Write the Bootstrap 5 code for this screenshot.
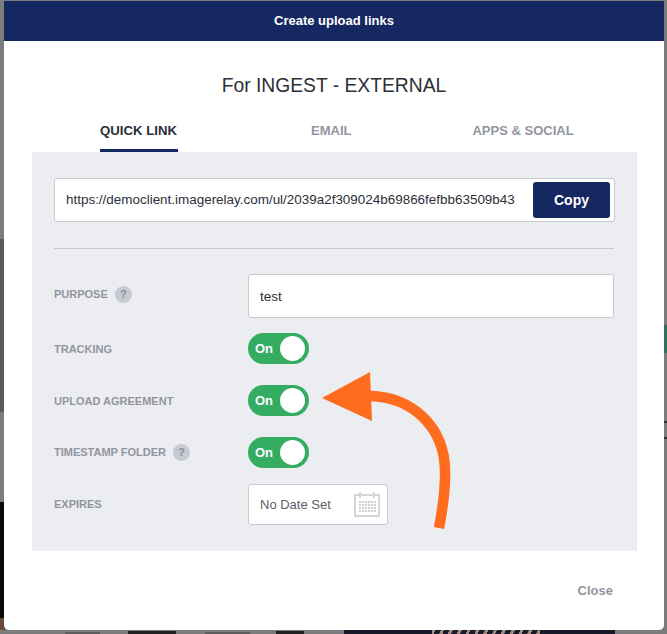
<!DOCTYPE html>
<html lang="en">
<head>
<meta charset="utf-8">
<title>Create upload links</title>
<link href="https://cdn.jsdelivr.net/npm/bootstrap@5.3.0/dist/css/bootstrap.min.css" rel="stylesheet">
<style>
html,body{height:634px;overflow:hidden}
body{font-family:"Liberation Sans",Arial,sans-serif;color:#2f3440;
background:
 linear-gradient(#6a4a3a,#6a4a3a) 0 618px/5px 12px no-repeat,
 linear-gradient(#5a5b60,#5a5b60) 0 239px/4px 173px no-repeat,
 linear-gradient(#0a0a0a,#0a0a0a) 0 502px/4px 116px no-repeat,
 linear-gradient(#2f6f5c,#2f6f5c) 664px 325px/3px 28px no-repeat,
 linear-gradient(#333,#333) 664px 421px/3px 2px no-repeat,
 linear-gradient(#333,#333) 664px 437px/3px 2px no-repeat,
 linear-gradient(#222,#222) 128px 631px/48px 3px no-repeat,
 linear-gradient(#222,#222) 276px 631px/28px 3px no-repeat,
 linear-gradient(#5d5d5d,#5d5d5d) 65px 632px/35px 2px no-repeat,
 linear-gradient(#5d5d5d,#5d5d5d) 205px 632px/45px 2px no-repeat,
 repeating-linear-gradient(115deg,#a08a80 0 3px,#1a1a2c 3px 8px) 432px 630px/108px 4px no-repeat,
 linear-gradient(#17172a,#17172a) 344px 630px/271px 4px no-repeat,
 #7c7c7c;
padding:1px 3px 4px 4px}
.sheet{width:660px;height:629px;background:#fff;border-radius:0 0 5px 5px}
.sheet-head{height:40px;background:#162861;color:#fff;font-size:13px;font-weight:700}
.sheet-title{font-size:19.3px;line-height:24px;margin:0;padding-top:33px;color:#2b2f38;font-weight:400}
.tabstrip{margin:17px 28px 0;height:37px;font-size:13px;font-weight:700;color:#92959f}
.tab-item{padding-top:8px;line-height:15px}
.tab-on{flex:none;margin-left:68px;margin-right:133px;width:78px;color:#2b2f38;border-bottom:3px solid #162861;font-size:13.2px;white-space:nowrap}
.tab-mid{flex:none;margin-right:121px}
.tab-last{flex:none}
.panel{margin:0 27px 0 28px;height:399px;background:#ecedf1;padding:26px 23px 0 22px}
.linkbox{height:44px;margin-right:-1px;background:#fff;border:1px solid #c8cad3;border-radius:3px;padding:3px 4px 3px 11px;font-size:13.45px;color:#2b2f38;white-space:nowrap}
.btn-copy{width:77px;height:36px;background:#162861;color:#fff;border:0;border-radius:3px;font-size:14px;font-weight:700;padding:0}
.btn-copy:hover{background:#162861;color:#fff}
.rule{margin:26px 0 25px;border:0;border-top:1px solid #c9cad0;opacity:1}
.field-row{display:flex;align-items:center}
.gap-wide{margin-top:21px}
.gap-tight{margin-top:15px}
.gap-date{margin-top:16px}
.field-label{width:194px;font-size:11px;font-weight:700;color:#92959f;display:flex;align-items:center}
.label-high{margin-top:-4px}
.label-low{padding-top:2px}
.hint{width:17px;height:17px;border-radius:50%;background:#c8cad3;color:#8b8e98;font-size:11px;font-weight:700;margin-left:7px;display:flex;align-items:center;justify-content:center}
.txt-field{width:366px;height:44px;background:#fff;border:1px solid #c8cad3;border-radius:3px;padding:0 11px;font-size:13.5px;line-height:44px;color:#2b2f38}
.switcher{width:61px;height:31px;border-radius:16px;background:#34ad63;color:#fff;font-size:13px;font-weight:700;padding:0 4px 0 7px;display:flex;align-items:center;justify-content:space-between}
.knob{width:25px;height:25px;background:#fff;border-radius:50%}
.date-field{width:140px;height:41px;background:#fff;border:1px solid #c8cad3;border-radius:3px;padding:0 7px 0 11px;font-size:13px;color:#5b5e68;display:flex;align-items:center;justify-content:space-between}
.close-link{font-size:13px;font-weight:700;color:#92959f;text-decoration:none;margin:32px 51px 0 0;line-height:15px}
.pointer-arrow{position:absolute;left:320px;top:370px;width:140px;height:165px;pointer-events:none}
</style>
</head>
<body>
<div class="sheet d-flex flex-column">
  <div class="sheet-head d-flex align-items-center justify-content-center">Create upload links</div>
  <h1 class="sheet-title text-center">For INGEST - EXTERNAL</h1>
  <div class="tabstrip d-flex">
    <div class="tab-item tab-on">QUICK LINK</div>
    <div class="tab-item tab-mid">EMAIL</div>
    <div class="tab-item tab-last">APPS &amp; SOCIAL</div>
  </div>
  <div class="panel">
    <div class="linkbox d-flex align-items-center justify-content-between">
      <span>https://democlient.imagerelay.com/ul/2039a2f309024b69866fefbb63509b43</span>
      <button type="button" class="btn btn-copy">Copy</button>
    </div>
    <hr class="rule">
    <div class="field-row">
      <div class="field-label label-high">PURPOSE<span class="hint">?</span></div>
      <div class="txt-field">test</div>
    </div>
    <div class="field-row gap-tight">
      <div class="field-label label-low">TRACKING</div>
      <div class="switcher"><span>On</span><span class="knob"></span></div>
    </div>
    <div class="field-row gap-wide">
      <div class="field-label label-low">UPLOAD AGREEMENT</div>
      <div class="switcher"><span>On</span><span class="knob"></span></div>
    </div>
    <div class="field-row gap-wide">
      <div class="field-label">TIMESTAMP FOLDER<span class="hint">?</span></div>
      <div class="switcher"><span>On</span><span class="knob"></span></div>
    </div>
    <div class="field-row gap-date">
      <div class="field-label">EXPIRES</div>
      <div class="date-field"><span>No Date Set</span>
        <svg width="26" height="25" viewBox="0 0 26 25" aria-hidden="true">
          <defs><pattern id="dots" width="3" height="3" patternUnits="userSpaceOnUse" x="5" y="9"><rect width="2" height="2" fill="#cfcfd2"/></pattern></defs>
          <rect x="1" y="3" width="24" height="21" fill="#fff" stroke="#d6d6d8" stroke-width="2"/>
          <rect x="5" y="0" width="2" height="6" fill="#d6d6d8"/><rect x="19" y="0" width="2" height="6" fill="#d6d6d8"/>
          <rect x="5" y="9" width="17" height="11" fill="url(#dots)"/>
        </svg>
      </div>
    </div>
  </div>
  <div class="d-flex justify-content-end"><a href="#" class="close-link">Close</a></div>
</div>
<svg class="pointer-arrow" viewBox="0 0 140 165" aria-hidden="true">
  <path d="M2 28 L50 2 L52 51 Z" fill="#ff6c1e"/>
  <path d="M50 26 C 90 27 127 55 125 107 C 125 125 122 142 119 158" fill="none" stroke="#ff6c1e" stroke-width="10.5"/>
</svg>
<script src="https://cdn.jsdelivr.net/npm/bootstrap@5.3.0/dist/js/bootstrap.bundle.min.js"></script>
</body>
</html>
